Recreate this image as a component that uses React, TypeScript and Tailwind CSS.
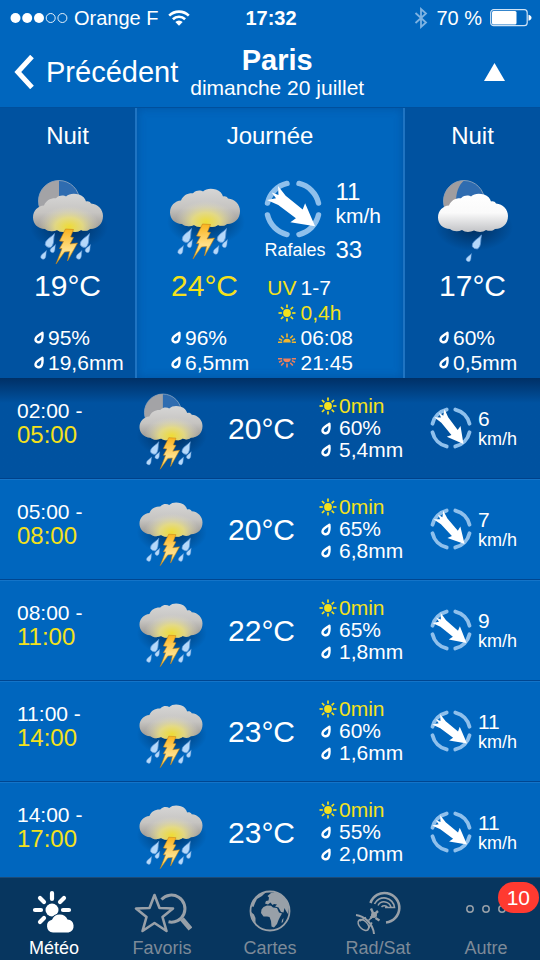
import { useId, type ReactNode } from "react";

type Sky = "storm" | "storm-night" | "rain-night";

const hours: { from: string; to: string; sky: Sky; temp: number; humidity: number; rain: string; wind: number; angle: number }[] = [
  { from: "02:00", to: "05:00", sky: "storm-night", temp: 20, humidity: 60, rain: "5,4", wind: 6, angle: 52 },
  { from: "05:00", to: "08:00", sky: "storm", temp: 20, humidity: 65, rain: "6,8", wind: 7, angle: 48 },
  { from: "08:00", to: "11:00", sky: "storm", temp: 22, humidity: 65, rain: "1,8", wind: 9, angle: 40 },
  { from: "11:00", to: "14:00", sky: "storm", temp: 23, humidity: 60, rain: "1,6", wind: 11, angle: 38 },
  { from: "14:00", to: "17:00", sky: "storm", temp: 23, humidity: 55, rain: "2,0", wind: 11, angle: 38 },
];

const CLOUD =
  "M17 48C10 48 5 43 5 36.500C5 29.500 10 25 16 24.500C18 19.500 22 17 28 17.200C32 13.500 36 14.500 38 15.500C41 12.500 46 12 51 13.500C55 14.700 57 17.500 58 20.500C60 20 62 20.500 63 22.500C70 23 75 28.500 75 35C75 42.500 70 48 62 48C60 50 56 50.500 53 49C50 51.500 45 51.500 41 49.500C37 51.500 32 51.500 29 49C25 51 20 50.500 17 48Z";

function Drop({ x, y, s }: { x: number; y: number; s: number }) {
  return (
    <path
      transform={`translate(${x} ${y}) rotate(28) scale(${s})`}
      d="M0 0C1 4 3.200 6.500 3.200 9.500a3.200 3.200 0 0 1-6.400 0C-3.200 6.500-1 4 0 0Z"
      fill="#b5d8fa"
      stroke="#5c97d6"
      strokeWidth="0.6"
    />
  );
}

function WeatherIcon({ sky, className }: { sky: Sky; className: string }) {
  const id = useId();
  const night = sky !== "storm";
  const storm = sky !== "rain-night";
  return (
    <svg viewBox="0 0 80 90" className={className} aria-hidden="true">
      <defs>
        <linearGradient id={`${id}c`} x1="0" y1="0" x2="0" y2="1">
          <stop offset="0" stopColor={storm ? "#d6d6d6" : "#ffffff"} />
          <stop offset="0.5" stopColor={storm ? "#c6c4c1" : "#fafafa"} />
          <stop offset="1" stopColor={storm ? "#94908a" : "#c2c3c6"} />
        </linearGradient>
        <radialGradient id={`${id}g`} gradientUnits="userSpaceOnUse" cx="0" cy="0" r="1" gradientTransform="translate(41 46) scale(31 21)">
          <stop offset="0" stopColor="#efdc34" />
          <stop offset="0.45" stopColor="#ebe07f" stopOpacity="0.85" />
          <stop offset="1" stopColor="#e0dcc8" stopOpacity="0" />
        </radialGradient>
        <radialGradient id={`${id}s`}>
          <stop offset="0" stopColor="#001c3d" stopOpacity="0.7" />
          <stop offset="1" stopColor="#001c3d" stopOpacity="0" />
        </radialGradient>
        <linearGradient id={`${id}b`} x1="0" y1="0" x2="0" y2="1">
          <stop offset="0" stopColor="#fbb31c" />
          <stop offset="0.6" stopColor="#ffe08a" />
          <stop offset="1" stopColor="#f8c82e" />
        </linearGradient>
      </defs>
      {night && (
        <g>
          <circle cx="31" cy="25" r="20.500" fill="#2f6cb0" stroke="#7f9dbd" strokeWidth="1" />
          {storm ? (
            <path d="M31 4.500a20.500 20.500 0 0 0 0 41Z" fill="#a3a3a6" />
          ) : (
            <path d="M31 4.500a20.500 20.500 0 0 0 0 41C21 36 20 14 31 4.500Z" fill="#a09d9f" />
          )}
        </g>
      )}
      <g transform={night ? "translate(0 5)" : undefined}>
        <ellipse cx="41" cy="46" rx="39" ry="24" fill={`url(#${id}s)`} />
        <path d={CLOUD} fill={`url(#${id}c)`} />
        {storm && <path d={CLOUD} fill={`url(#${id}g)`} />}
        {storm ? (
          <g>
            <path
              d="M37.500 48L45.500 48.500L42.500 56L45.500 56.500L42 63L49.500 62L39.500 80L41.500 70.500L36.500 71L28 83L34 67.500L31.500 67.500L35.500 60.500L31.500 60Z"
              fill={`url(#${id}b)`}
              stroke="#c98212"
              strokeWidth="0.6"
            />
            <Drop x={26.500} y={52.500} s={1.2} />
            <Drop x={27.500} y={63.500} s={0.7} />
            <Drop x={18.500} y={69.500} s={0.75} />
            <Drop x={61.500} y={52.500} s={1.2} />
            <Drop x={62.500} y={63.500} s={0.7} />
            <Drop x={54} y={69.500} s={0.75} />
          </g>
        ) : (
          <g>
            <Drop x={48.500} y={54} s={1.2} />
            <Drop x={38.500} y={72.500} s={0.7} />
          </g>
        )}
      </g>
    </svg>
  );
}

function WindDial({ angle, className }: { angle: number; className: string }) {
  return (
    <svg viewBox="-29 -29 58 58" className={className} aria-hidden="true">
      <circle r="26.200" fill="none" stroke="#8fc0ec" strokeWidth="5.400" strokeLinecap="round" pathLength={360} strokeDasharray="63 27" strokeDashoffset="-13.500" />
      <path
        transform={`rotate(${angle})`}
        d="M-26-9L-14-6L8-5.500L6-12L28 0L6 12L8 5.500L-14 6L-26 9L-20 2L-27 0L-20-2Z"
        fill="#fff"
      />
    </svg>
  );
}

function DropIcon() {
  return (
    <svg viewBox="0 0 10 13" className="h-[13px] w-[10px] shrink-0" fill="none" aria-hidden="true">
      <path d="M8.400 1.800C8.700 5 8.600 7 7.900 8.700C7.100 10.700 5.500 11.500 4 11.200C2.200 10.800 1.300 9.500 1.600 7.900C2 5.500 5 4.200 8.400 1.800Z" stroke="#fff" strokeWidth="2.400" strokeLinejoin="round" />
    </svg>
  );
}

function SunIcon() {
  return (
    <svg viewBox="-9 -9 18 18" className="size-[18px] shrink-0" stroke="#f4e11c" strokeWidth="1.700" aria-hidden="true">
      <circle r="3.900" fill="#f4e11c" stroke="none" />
      {[0, 45, 90, 135, 180, 225, 270, 315].map((a) => (
        <path key={a} d="M5.200 0H8.500" transform={`rotate(${a})`} />
      ))}
    </svg>
  );
}

function HorizonIcon({ color, down }: { color: string; down?: boolean }) {
  return (
    <svg viewBox="-9 -9 18 12" className="h-3 w-[18px] shrink-0" stroke={color} strokeWidth="1.600" aria-hidden="true">
      <g transform={down ? "translate(0 -6) scale(1 -1)" : undefined}>
        <path d="M-3.800 1.500a3.800 3.800 0 0 1 7.600 0Z" fill={color} stroke="none" />
        <path d="M-9 1.300H-4.800M4.800 1.300H9M0-3.500V-7.500M-3.300-2.700L-5.800-5.600M3.300-2.700L5.800-5.600M-4.800-0.600L-8-2.200M4.800-0.600L8-2.200" />
      </g>
    </svg>
  );
}

function Period({ title, sky, temp, humidity, rain, night, children }: {
  title: string;
  sky: Sky;
  temp: number;
  humidity: number;
  rain: string;
  night?: boolean;
  children?: ReactNode;
}) {
  return (
    <section className={night ? "bg-[#0052a0] pt-[13px] pb-[3px]" : "border-x-2 border-[#1f74c2] bg-[#0066be] pt-[13px] pb-[3px] shadow-[inset_0_0_10px_rgba(0,60,130,0.4)]"}>
      <h2 className="mb-[25px] text-center text-[24px] leading-[30px]">{title}</h2>
      <div className="flex justify-between pl-7">
        <div>
          <WeatherIcon sky={sky} className="h-[90px] w-20" />
          <div className="pl-1.5">
            <p className={night ? "text-[30px] leading-10" : "text-[30px] leading-10 text-[#f4e11c]"}>{temp}°C</p>
            <ul className="mt-[19px] text-[21px] leading-[25px]">
              <li className="flex items-center gap-1"><DropIcon />{humidity}%</li>
              <li className="flex items-center gap-1"><DropIcon />{rain}mm</li>
            </ul>
          </div>
        </div>
        {children}
      </div>
    </section>
  );
}

function Tab({ label, active, children }: { label: string; active?: boolean; children: ReactNode }) {
  return (
    <a href="#" className={active ? "relative flex flex-col items-center text-white" : "relative flex flex-col items-center text-[#98a0a8]"}>
      {children}
      <span className={active ? "text-[18px] leading-6" : "text-[18px] leading-6 text-[#7d8a98]"}>{label}</span>
    </a>
  );
}

export default function App() {
  return (
    <div className="flex h-screen flex-col bg-[#0066be] font-['Liberation_Sans',Arial,sans-serif] text-white">
      {/* Status bar */}
      <div className="grid grid-cols-[1fr_auto_1fr] items-center pt-1.5 pr-2 pl-2.5 text-[20px] leading-6">
        <div className="flex items-center gap-1.5">
          <svg viewBox="0 0 58 12" className="h-3 w-[58px]" aria-hidden="true">
            <circle cx="5.500" cy="6" r="5" fill="#fff" />
            <circle cx="17.200" cy="6" r="5" fill="#fff" />
            <circle cx="29" cy="6" r="5" fill="#fff" />
            <circle cx="40.700" cy="6" r="4.500" fill="none" stroke="#fff" strokeWidth="0.900" />
            <circle cx="52.400" cy="6" r="4.500" fill="none" stroke="#fff" strokeWidth="0.900" />
          </svg>
          <span>Orange F</span>
          <svg viewBox="0 0 22 16" className="ml-1 h-4 w-[22px]" fill="none" stroke="#fff" strokeWidth="2.600" aria-hidden="true">
            <path d="M1.200 5.600a14 14 0 0 1 19.600 0" />
            <path d="M4.900 9.300a8.700 8.700 0 0 1 12.200 0" />
            <path d="M11 15.800L7.300 12a5.200 5.200 0 0 1 7.400 0Z" fill="#fff" stroke="none" />
          </svg>
        </div>
        <span className="font-bold">17:32</span>
        <div className="flex items-center justify-end gap-2">
          <svg viewBox="0 0 14 22" className="h-[22px] w-3.5" fill="none" stroke="#7fb3e2" strokeWidth="1.800" aria-hidden="true">
            <path d="M1.500 6L12 15.500L7 20V2L12 6.500L1.500 16" />
          </svg>
          <span>70 %</span>
          <svg viewBox="0 0 42 18" className="h-[18px] w-[42px]" aria-hidden="true">
            <rect x="0.700" y="0.700" width="36.500" height="16" rx="3" fill="none" stroke="#cfe3f6" strokeWidth="1.200" />
            <rect x="2" y="2" width="24.500" height="13.400" rx="1.500" fill="#fff" />
            <path d="M38.500 5.700c4 1 4 5 0 6Z" fill="#fff" />
          </svg>
        </div>
      </div>

      {/* Header */}
      <header className="flex items-center border-b border-[#004f9c] pt-3.5 pr-[35px] pb-2 pl-3.5">
        <button type="button" className="flex items-center gap-3 text-[29px] leading-9">
          <svg viewBox="0 0 20 34" className="h-[34px] w-5" fill="none" stroke="#fff" strokeWidth="5" aria-hidden="true">
            <path d="M18 1.500L3.800 17L18 32.500" />
          </svg>
          Précédent
        </button>
        <div className="ml-3 text-center">
          <h1 className="text-[29px] leading-[33px] font-bold">Paris</h1>
          <p className="text-[21px] leading-[22px]">dimanche 20 juillet</p>
        </div>
        <button type="button" aria-label="Replier" className="ml-auto">
          <svg viewBox="0 0 21 18" className="h-[18px] w-[21px]" aria-hidden="true">
            <path d="M10.500 0L21 18H0Z" fill="#fff" />
          </svg>
        </button>
      </header>

      {/* Day summary */}
      <div className="grid grid-cols-[1fr_2fr_1fr]">
        <Period title="Nuit" sky="storm-night" temp={19} humidity={95} rain="19,6" night />
        <Period title="Journée" sky="storm" temp={24} humidity={96} rain="6,5">
          <div className="pt-1 pr-[22px]">
            <div className="grid grid-cols-[auto_auto] gap-x-2.5">
              <WindDial angle={38} className="size-[58px]" />
              <p className="text-[21px] leading-6">
                <span className="block text-[24px]">11</span>
                km/h
              </p>
              <span className="text-[18px] leading-6">Rafales</span>
              <span className="text-[24px] leading-6">33</span>
            </div>
            <ul className="mt-[13px] text-[21px] leading-[25px]">
              <li className="grid grid-cols-[32px_auto] gap-1"><span className="justify-self-end text-[#f4e11c]">UV</span>1-7</li>
              <li className="grid grid-cols-[32px_auto] items-center justify-items-start gap-1 text-[#f4e11c]"><span className="justify-self-end"><SunIcon /></span>0,4h</li>
              <li className="grid grid-cols-[32px_auto] items-center gap-1"><span className="justify-self-end"><HorizonIcon color="#f2b52e" /></span>06:08</li>
              <li className="grid grid-cols-[32px_auto] items-center gap-1"><span className="justify-self-end"><HorizonIcon color="#f0805a" down /></span>21:45</li>
            </ul>
          </div>
        </Period>
        <Period title="Nuit" sky="rain-night" temp={17} humidity={60} rain="0,5" night />
      </div>

      {/* Hourly forecast */}
      <ul className="min-h-0 flex-1 overflow-y-auto [scrollbar-width:none]">
        {hours.map((h) => (
          <li
            key={h.from}
            className={
              h.sky === "storm-night"
                ? "grid grid-cols-[118fr_93fr_91fr_111fr_110fr] items-center border-b border-[#00418a] bg-linear-to-b from-[#003066] to-[#0052a0] to-25% pl-[17px]"
                : "grid grid-cols-[118fr_93fr_91fr_111fr_110fr] items-center border-b border-[#004690] pl-[17px] shadow-[inset_0_1px_#1474c8]"
            }
          >
            <p className="pb-2.5 text-[21px] leading-6">
              {h.from} -
              <span className="block text-[24px] text-[#f4e11c]">{h.to}</span>
            </p>
            <WeatherIcon sky={h.sky} className="mt-1 h-[81px] w-[72px]" />
            <p className="text-[30px]">{h.temp}°C</p>
            <ul className="py-[17px] text-[21px] leading-[22px]">
              <li className="flex items-center gap-0.5 text-[#f4e11c]"><SunIcon />0min</li>
              <li className="flex items-center gap-2 pl-0.5"><DropIcon />{h.humidity}%</li>
              <li className="flex items-center gap-2 pl-0.5"><DropIcon />{h.rain}mm</li>
            </ul>
            <div className="flex items-center gap-1.5">
              <WindDial angle={h.angle} className="size-[42px]" />
              <div>
                <p className="text-[21px] leading-[22px]">{h.wind}</p>
                <p className="text-[18px] leading-[18px]">km/h</p>
              </div>
            </div>
          </li>
        ))}
      </ul>

      {/* Tab bar */}
      <nav className="grid grid-cols-5 border-t border-[#1d4a75] bg-[#07365f] pt-2.5">
        <Tab label="Météo" active>
          <svg viewBox="0 0 48 48" className="size-12" fill="currentColor" aria-hidden="true">
            <circle cx="22" cy="22" r="6.500" />
            <path d="M22 5V11M5 22H11M33 22H39M10 10L14 14M34 10L30 14M10 34L14 30" stroke="currentColor" strokeWidth="4.200" strokeLinecap="round" />
            <path
              d="M23 44.500a6.500 6.500 0 0 1-1-12.800A8.500 8.500 0 0 1 37.500 31.500A6.600 6.600 0 0 1 38.500 44.500Z"
              stroke="#07365f"
              strokeWidth="2"
              paintOrder="stroke"
            />
          </svg>
        </Tab>
        <Tab label="Favoris">
          <svg viewBox="0 0 60 48" className="h-12 w-[60px]" fill="none" stroke="currentColor" strokeWidth="2.600" aria-hidden="true">
            <path d="M22.500 7L27.500 20L41 20.500L30.500 29L34.500 43L22.500 35L10.500 43L14.500 29L4 20.500L17.500 20Z" strokeLinejoin="round" />
            <path d="M29.500 11.500A13.500 13.500 0 1 1 36.500 33.800" strokeWidth="3" />
            <path d="M50 31L58.500 41" strokeWidth="5" />
          </svg>
        </Tab>
        <Tab label="Cartes">
          <svg viewBox="0 0 48 48" className="size-12" fill="currentColor" aria-hidden="true">
            <circle cx="24" cy="23" r="19.500" fill="none" stroke="currentColor" strokeWidth="1.800" />
            <path d="M17.500 19L21 17.500L25 17.800L27 19.500L31 20L33 24.500L36 25.500L34 29L32.500 32L31 36L28 39.500L25.500 38.500L25 33L23.500 29L21 28.500L17.500 28.500L15 25L15.500 21.500Z" />
            <path d="M19 15.500L20 13L22.500 12.500L23 9.500L21.500 8L25 5L30 4.500L36 7.500L41 13L43 19L42 26L40 23L38.500 20L37.500 24.500L35 24L32.500 19.500L29 18.500L31 16.500L28 16L26.500 17L24.500 14.500L22 16.500Z" />
            <path d="M5 18L7 13L12 7L20 4L16 8L11 11L9 15L7.500 19Z" />
            <path d="M5 24L8 26.500L9.500 30L9.500 35C6.500 32 5 28.500 5 24Z" />
            <path d="M36 32L37.500 30L37 34L35.500 35Z" />
          </svg>
        </Tab>
        <Tab label="Rad/Sat">
          <svg viewBox="0 0 48 48" className="size-12" fill="none" stroke="currentColor" strokeWidth="1.500" aria-hidden="true">
            <path d="M16.500 15A14.800 14.800 0 1 1 32 34.500" strokeWidth="2.600" />
            <path d="M20.500 16A10.500 10.500 0 0 1 40.500 19.500H31" strokeWidth="1.700" />
            <path d="M24 17.500A7 7 0 0 1 37 19.500M27.500 19A3.800 3.800 0 0 1 33.500 19.500" />
            <path d="M2 27C10 28 19 35 20 46" strokeWidth="2" />
            <ellipse cx="9.500" cy="37" rx="6.500" ry="4" transform="rotate(45 9.500 37)" />
            <path d="M5.500 33L12 29.500M14 41L18 34.500M14.500 32.500L19 28" />
            <path d="M17 20.500L19 25M21.500 30L25.500 32.500M24 23L16.500 30" strokeWidth="2.400" />
            <circle cx="20" cy="27" r="3" fill="currentColor" stroke="none" />
          </svg>
        </Tab>
        <Tab label="Autre">
          <svg viewBox="0 0 48 48" className="size-12" fill="none" stroke="currentColor" strokeWidth="1.500" aria-hidden="true">
            <circle cx="8" cy="21" r="3.200" />
            <circle cx="24" cy="21" r="3.200" />
            <circle cx="40" cy="21" r="3.200" />
          </svg>
          <span className="absolute -top-1.5 right-px rounded-full bg-[#ff3a30] px-[9px] text-[21px] leading-[31px] text-white">10</span>
        </Tab>
      </nav>
    </div>
  );
}
